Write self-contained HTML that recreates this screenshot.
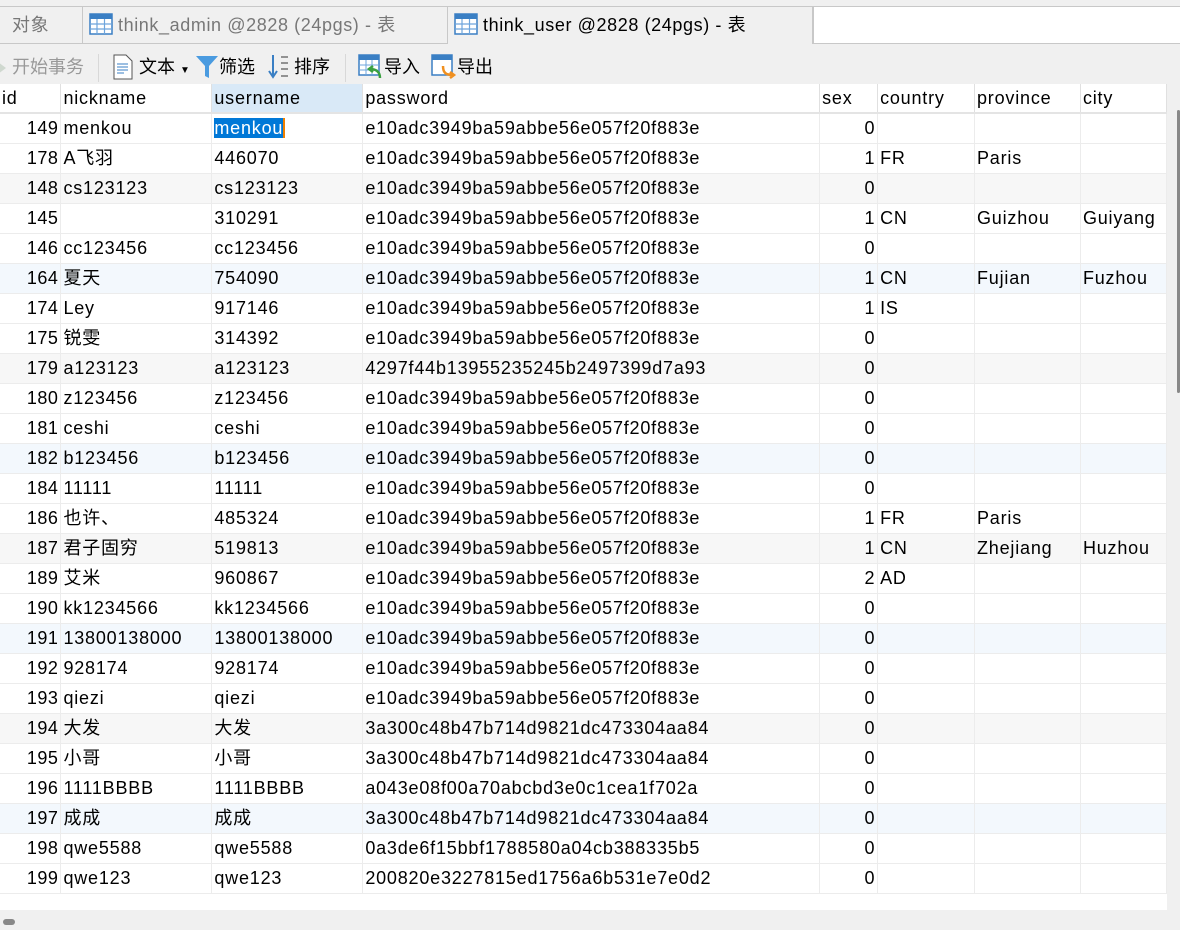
<!DOCTYPE html>
<html><head><meta charset="utf-8"><style>
*{margin:0;padding:0;box-sizing:border-box}
body{width:1180px;height:930px;background:#f0f0f0;font-family:"Liberation Sans","Noto Sans CJK SC",sans-serif;font-size:18px;color:#000;position:relative;overflow:hidden}
.tabbar{position:absolute;left:0;top:6px;width:1180px;height:38px;border-top:1px solid #c8c8c8;letter-spacing:0.6px}
.tab{position:absolute;top:0;height:37px;border-right:1px solid #c8c8c8;border-bottom:1px solid #c8c8c8;color:#777;line-height:36px;padding-left:6px;white-space:nowrap}
.tab.act{border-bottom:none;color:#000;background:#f0f0f0}
.tico{display:inline-block;vertical-align:middle;margin-right:5px;margin-top:-4px}
.rbox{position:absolute;left:813px;top:0;width:367px;height:37px;background:#fff;border-left:1px solid #c8c8c8;border-bottom:1px solid #c8c8c8}
.tb{position:absolute;top:50px;height:34px;left:0;width:1180px}
.ti{position:absolute;top:0;line-height:34px;white-space:nowrap}
.sep{position:absolute;top:4px;width:1px;height:28px;background:#d8d8d8}
.grid{position:absolute;left:0;top:84px;width:1167px;height:826px;background:#fff}
table{border-collapse:collapse;table-layout:fixed;position:absolute;left:0;top:0;letter-spacing:0.8px}
td,th{height:30px;border-right:1px solid #ececec;border-bottom:1px solid #ececec;font-weight:normal;text-align:left;padding-left:2px;white-space:nowrap;overflow:hidden;line-height:28px}
th{height:28px;border-bottom:2px solid #e4e4e4;border-right:1px solid #e0e0e0}
td.r{text-align:right;padding-right:2px;padding-left:0;letter-spacing:0.5px}
tr.g td{background:#f7f7f7}
tr.b td{background:#f3f8fd}
.sel{background:#0078d7;color:#fff;border-right:2px solid #f08000}
.vs{position:absolute;left:1177px;top:110px;width:3px;height:283px;background:#888;border-radius:2px}
.hs{position:absolute;left:3px;top:919px;width:12px;height:6px;background:#888;border-radius:3px}
</style></head><body>
<div class="tabbar">
<div class="tab" style="left:0;width:83px;padding-left:12px">对象</div>
<div class="tab" style="left:83px;width:365px"><svg class="tico" width="24" height="22" viewBox="0 0 24 22"><rect x="1" y="1" width="22" height="20" fill="#fff" stroke="#3a7fc4" stroke-width="1.5"/><rect x="1" y="1" width="22" height="5" fill="#3a7fc4"/><path d="M1 11H23M1 16H23M8 6V21M15.5 6V21" stroke="#6ea5dc" stroke-width="1.2"/></svg>think_admin @2828 (24pgs) - 表</div>
<div class="tab act" style="left:448px;width:365px;border-bottom:none"><svg class="tico" width="24" height="22" viewBox="0 0 24 22"><rect x="1" y="1" width="22" height="20" fill="#fff" stroke="#3a7fc4" stroke-width="1.5"/><rect x="1" y="1" width="22" height="5" fill="#3a7fc4"/><path d="M1 11H23M1 16H23M8 6V21M15.5 6V21" stroke="#6ea5dc" stroke-width="1.2"/></svg>think_user @2828 (24pgs) - 表</div>
<div class="rbox"></div>
</div>
<div class="tb">
<div class="ti" style="left:-4px;color:#999"><svg width="16" height="20" style="vertical-align:middle"><path d="M2 4L10 10L2 16Z" fill="#cfd8cf"/></svg>开始事务</div>
<div class="sep" style="left:98px"></div>
<div class="ti" style="left:112px"><svg width="22" height="26" style="vertical-align:middle;margin-top:-3px"><path d="M2 1H14L20 7V25H2Z" fill="#fff" stroke="#555"/><path d="M5 10H16M5 13H16M5 16H16M5 19H12" stroke="#3a7fc4"/></svg> 文本 <span style="font-size:10px">▼</span></div>
<div class="ti" style="left:195px"><svg width="24" height="26" style="vertical-align:middle;margin-top:-3px"><path d="M1 2H23L14 12V24L10 22V12Z" fill="#4a9be0"/></svg>筛选</div>
<div class="ti" style="left:268px"><svg width="26" height="26" style="vertical-align:middle;margin-top:-3px"><path d="M5 1V22M1 17L5 23L9 17" stroke="#3a7fc4" stroke-width="2" fill="none"/><path d="M13 3H20M13 9H20M13 15H20M13 22H20" stroke="#333"/></svg>排序</div>
<div class="sep" style="left:345px"></div>
<div class="ti" style="left:358px"><svg width="26" height="26" style="vertical-align:middle;margin-top:-3px"><rect x="1" y="1" width="20" height="20" fill="#fff" stroke="#3a7fc4" stroke-width="1.5"/><rect x="1" y="1" width="20" height="5" fill="#3a7fc4"/><path d="M1 11H21M1 16H21M8 6V21M14 6V21" stroke="#6ea5dc"/><path d="M22 24C22 18 18 15 12 15M15 12L11 15L15 18" stroke="#3aa040" stroke-width="2.5" fill="none"/></svg>导入</div>
<div class="ti" style="left:431px"><svg width="26" height="26" style="vertical-align:middle;margin-top:-3px"><rect x="1" y="1" width="20" height="20" fill="#fff" stroke="#3a7fc4" stroke-width="1.5"/><rect x="1" y="1" width="20" height="5" fill="#3a7fc4"/><path d="M12 12C12 19 15 21 22 21M19 18L23 21L19 24" stroke="#f09020" stroke-width="2.5" fill="none"/></svg>导出</div>
</div>
<div class="grid">
<table>
<colgroup><col style="width:61px"><col style="width:151px"><col style="width:151px"><col style="width:457px"><col style="width:58px"><col style="width:97px"><col style="width:106px"><col style="width:86px"></colgroup>
<tr><th>id</th><th>nickname</th><th style="background:#d9e9f7">username</th><th>password</th><th>sex</th><th>country</th><th>province</th><th>city</th></tr>
<tr><td class="r">149</td><td>menkou</td><td><span class="sel">menkou</span></td><td>e10adc3949ba59abbe56e057f20f883e</td><td class="r">0</td><td></td><td></td><td></td></tr>
<tr><td class="r">178</td><td>A飞羽</td><td>446070</td><td>e10adc3949ba59abbe56e057f20f883e</td><td class="r">1</td><td>FR</td><td>Paris</td><td></td></tr>
<tr class="g"><td class="r">148</td><td>cs123123</td><td>cs123123</td><td>e10adc3949ba59abbe56e057f20f883e</td><td class="r">0</td><td></td><td></td><td></td></tr>
<tr><td class="r">145</td><td></td><td>310291</td><td>e10adc3949ba59abbe56e057f20f883e</td><td class="r">1</td><td>CN</td><td>Guizhou</td><td>Guiyang</td></tr>
<tr><td class="r">146</td><td>cc123456</td><td>cc123456</td><td>e10adc3949ba59abbe56e057f20f883e</td><td class="r">0</td><td></td><td></td><td></td></tr>
<tr class="b"><td class="r">164</td><td>夏天</td><td>754090</td><td>e10adc3949ba59abbe56e057f20f883e</td><td class="r">1</td><td>CN</td><td>Fujian</td><td>Fuzhou</td></tr>
<tr><td class="r">174</td><td>Ley</td><td>917146</td><td>e10adc3949ba59abbe56e057f20f883e</td><td class="r">1</td><td>IS</td><td></td><td></td></tr>
<tr><td class="r">175</td><td>锐雯</td><td>314392</td><td>e10adc3949ba59abbe56e057f20f883e</td><td class="r">0</td><td></td><td></td><td></td></tr>
<tr class="g"><td class="r">179</td><td>a123123</td><td>a123123</td><td>4297f44b13955235245b2497399d7a93</td><td class="r">0</td><td></td><td></td><td></td></tr>
<tr><td class="r">180</td><td>z123456</td><td>z123456</td><td>e10adc3949ba59abbe56e057f20f883e</td><td class="r">0</td><td></td><td></td><td></td></tr>
<tr><td class="r">181</td><td>ceshi</td><td>ceshi</td><td>e10adc3949ba59abbe56e057f20f883e</td><td class="r">0</td><td></td><td></td><td></td></tr>
<tr class="b"><td class="r">182</td><td>b123456</td><td>b123456</td><td>e10adc3949ba59abbe56e057f20f883e</td><td class="r">0</td><td></td><td></td><td></td></tr>
<tr><td class="r">184</td><td>11111</td><td>11111</td><td>e10adc3949ba59abbe56e057f20f883e</td><td class="r">0</td><td></td><td></td><td></td></tr>
<tr><td class="r">186</td><td>也许、</td><td>485324</td><td>e10adc3949ba59abbe56e057f20f883e</td><td class="r">1</td><td>FR</td><td>Paris</td><td></td></tr>
<tr class="g"><td class="r">187</td><td>君子固穷</td><td>519813</td><td>e10adc3949ba59abbe56e057f20f883e</td><td class="r">1</td><td>CN</td><td>Zhejiang</td><td>Huzhou</td></tr>
<tr><td class="r">189</td><td>艾米</td><td>960867</td><td>e10adc3949ba59abbe56e057f20f883e</td><td class="r">2</td><td>AD</td><td></td><td></td></tr>
<tr><td class="r">190</td><td>kk1234566</td><td>kk1234566</td><td>e10adc3949ba59abbe56e057f20f883e</td><td class="r">0</td><td></td><td></td><td></td></tr>
<tr class="b"><td class="r">191</td><td>13800138000</td><td>13800138000</td><td>e10adc3949ba59abbe56e057f20f883e</td><td class="r">0</td><td></td><td></td><td></td></tr>
<tr><td class="r">192</td><td>928174</td><td>928174</td><td>e10adc3949ba59abbe56e057f20f883e</td><td class="r">0</td><td></td><td></td><td></td></tr>
<tr><td class="r">193</td><td>qiezi</td><td>qiezi</td><td>e10adc3949ba59abbe56e057f20f883e</td><td class="r">0</td><td></td><td></td><td></td></tr>
<tr class="g"><td class="r">194</td><td>大发</td><td>大发</td><td>3a300c48b47b714d9821dc473304aa84</td><td class="r">0</td><td></td><td></td><td></td></tr>
<tr><td class="r">195</td><td>小哥</td><td>小哥</td><td>3a300c48b47b714d9821dc473304aa84</td><td class="r">0</td><td></td><td></td><td></td></tr>
<tr><td class="r">196</td><td>1111BBBB</td><td>1111BBBB</td><td>a043e08f00a70abcbd3e0c1cea1f702a</td><td class="r">0</td><td></td><td></td><td></td></tr>
<tr class="b"><td class="r">197</td><td>成成</td><td>成成</td><td>3a300c48b47b714d9821dc473304aa84</td><td class="r">0</td><td></td><td></td><td></td></tr>
<tr><td class="r">198</td><td>qwe5588</td><td>qwe5588</td><td>0a3de6f15bbf1788580a04cb388335b5</td><td class="r">0</td><td></td><td></td><td></td></tr>
<tr><td class="r">199</td><td>qwe123</td><td>qwe123</td><td>200820e3227815ed1756a6b531e7e0d2</td><td class="r">0</td><td></td><td></td><td></td></tr>
</table>
</div>
<div class="vs"></div>
<div class="hs"></div>
</body></html>
